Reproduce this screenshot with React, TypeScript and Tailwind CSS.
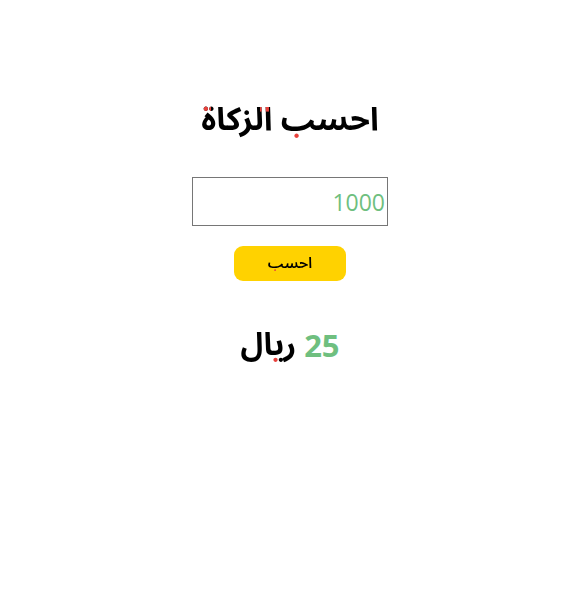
const arabic = { fontFamily: '"Noto Sans Arabic", "Noto Sans", sans-serif' };
const latin = { fontFamily: '"Open Sans", "Noto Sans", sans-serif' };

// red dots: red patches under background-clip:text, rest of the glyphs black
export default function App() {
  return (
    <div dir="rtl" className="w-[576px] h-[612px] bg-white flex flex-col items-center pl-[4px]" style={arabic}>
      <h1 className="mt-[96px] text-[32px] font-bold leading-[1.5] bg-black bg-no-repeat bg-clip-text text-transparent [background-image:linear-gradient(#e8413c,#e8413c),linear-gradient(#e8413c,#e8413c),linear-gradient(#e8413c,#e8413c)] [background-position:0em_0.18em,1.82em_0.18em,2.85em_1.08em] [background-size:0.33em_0.29em,0.28em_0.3em,0.3em_0.32em]">
        احسب الزكاة
      </h1>
      <input
        dir="rtl"
        defaultValue="1000"
        className="mt-[33px] w-[196px] h-[49px] border border-[#767676] px-[2px] text-right text-[23px] text-[#6fbf7f] outline-none"
        style={latin}
      />
      <button className="mt-[20px] w-[112px] h-[35px] rounded-[9px] bg-[#ffd200] flex items-center justify-center">
        <span className="text-[15px] font-semibold leading-[1.5] bg-black bg-no-repeat bg-clip-text text-transparent [background-image:linear-gradient(#e8413c,#e8413c)] [background-position:0.2em_1.12em] [background-size:0.5em_0.4em]">
          احسب
        </span>
      </button>
      <div className="mt-[41px] flex items-center gap-[8px] text-[31px] font-bold leading-[1.5]">
        <span className="text-[#6fbf7f]" style={latin}>25</span>
        <span className="bg-black bg-no-repeat bg-clip-text text-transparent [background-image:linear-gradient(#e8413c,#e8413c)] [background-position:0.88em_1.1em] [background-size:0.32em_0.25em]">
          ريال
        </span>
      </div>
    </div>
  );
}
